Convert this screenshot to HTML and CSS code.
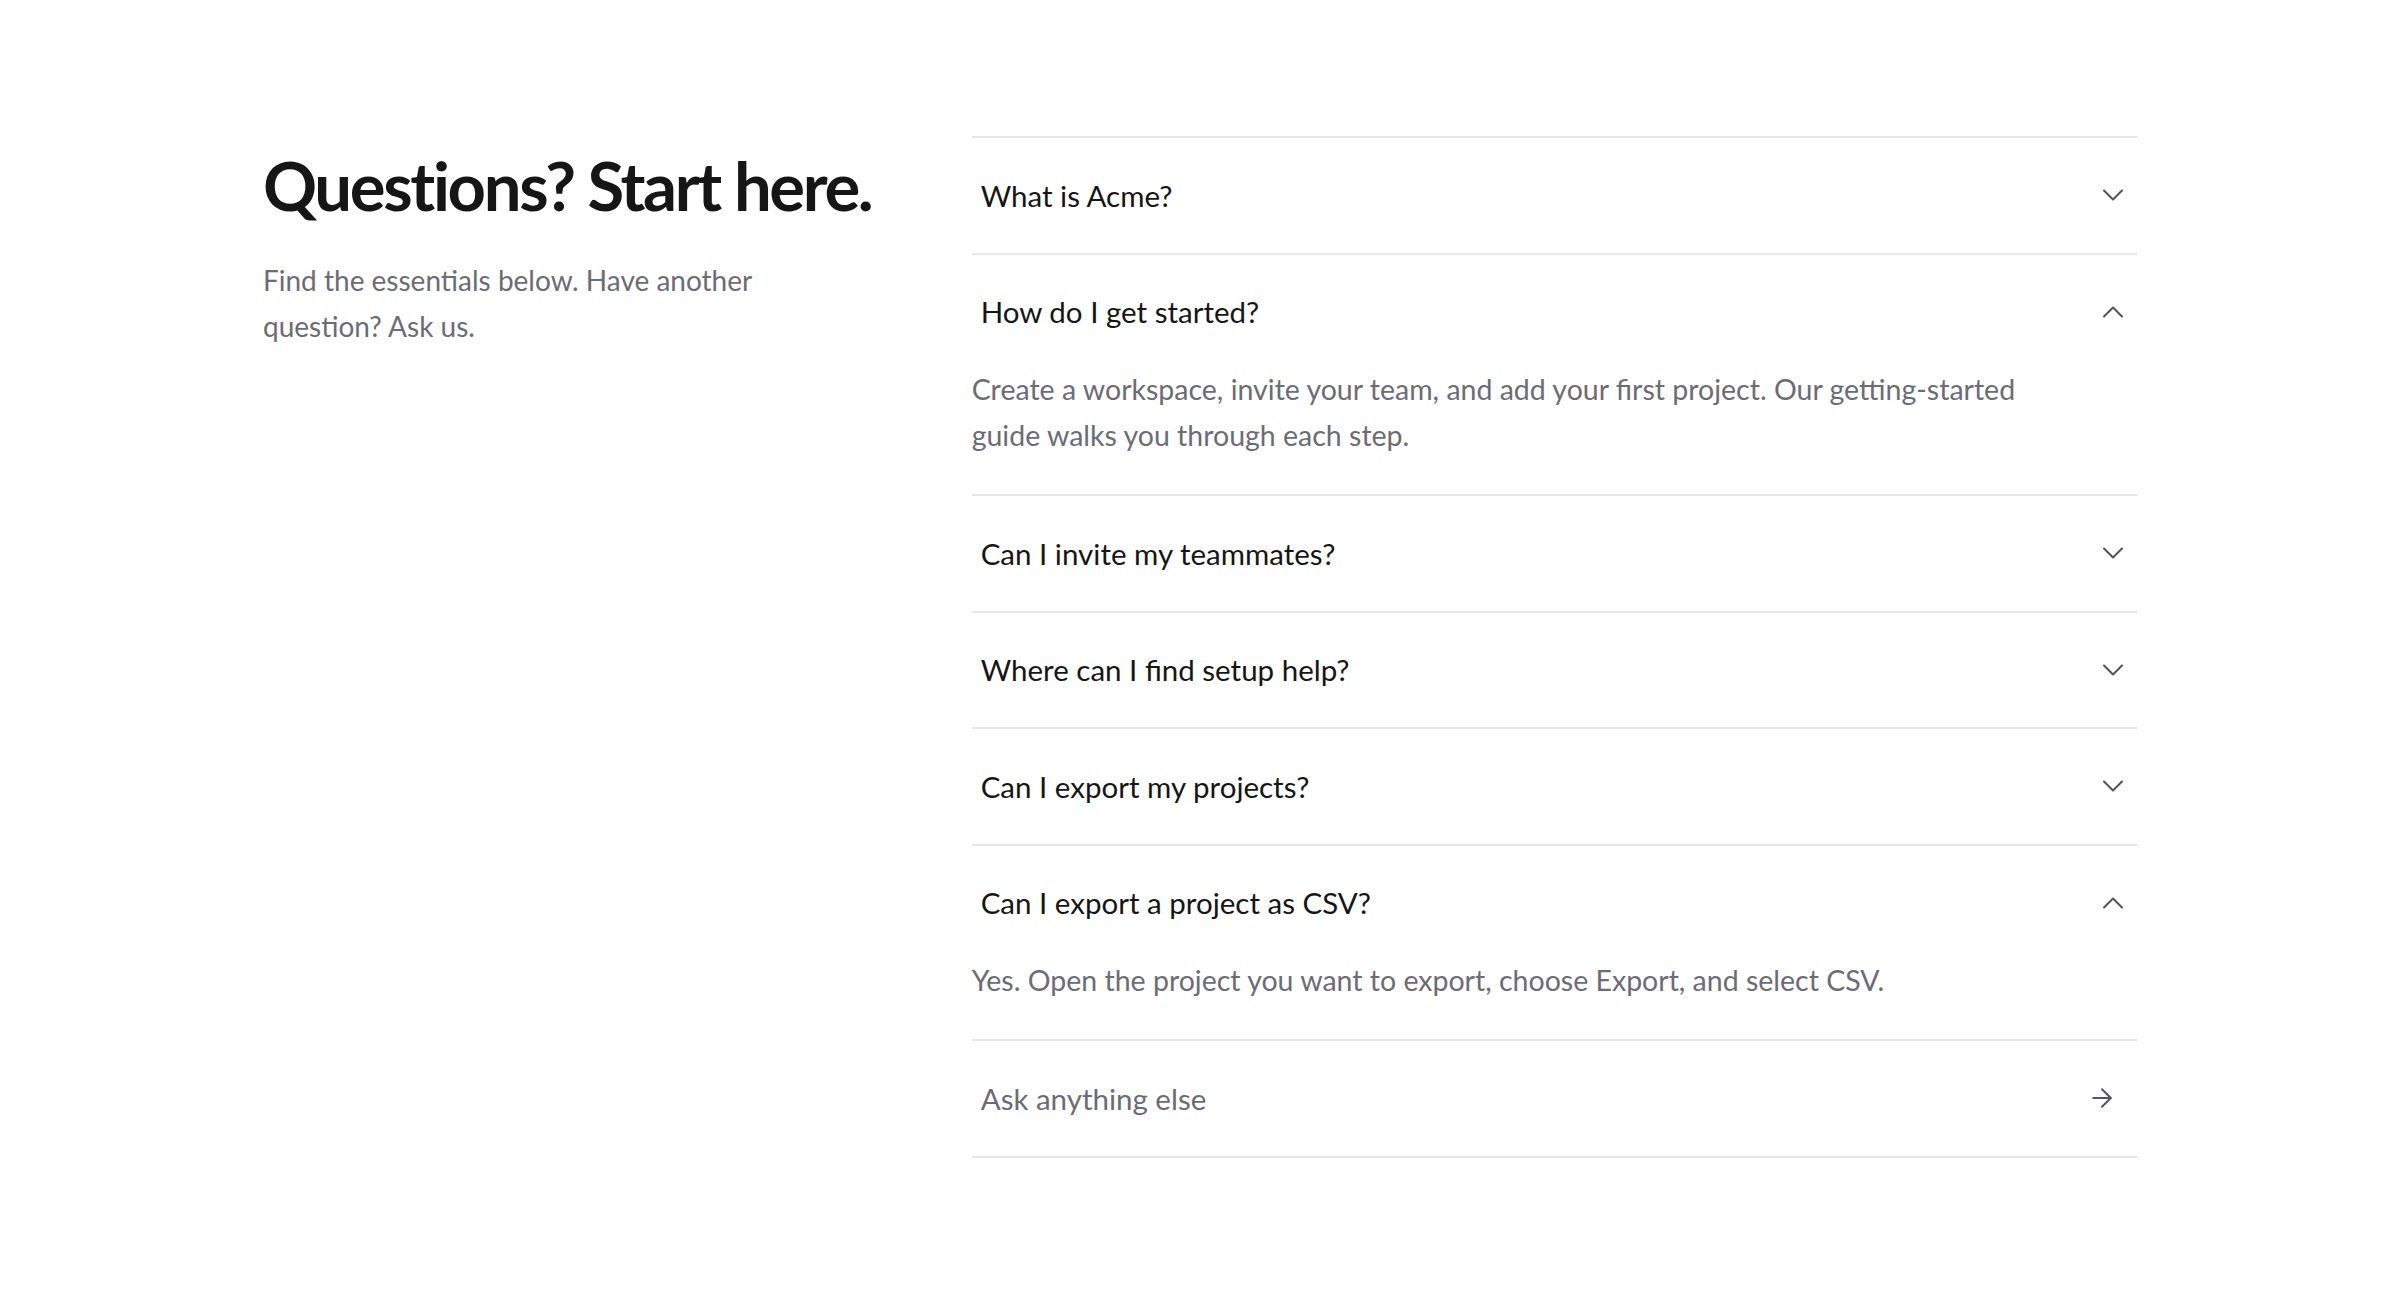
FILE: index.html
```html
<!DOCTYPE html>
<html lang="en">
<head>
<meta charset="utf-8">
<title>FAQ</title>
<link rel="stylesheet" href="styles.css">
</head>
<body>
<section class="faq">
  <div class="intro">
    <h1 class="title">Questions? Start here.</h1>
    <p class="lead">Find the essentials below. Have another question? Ask us.</p>
  </div>
  <div class="list">
    <div class="item">
      <div class="head"><span class="q">What is Acme?</span>
        <svg class="chev" viewBox="0 0 24 24"><path d="m6 9 6 6 6-6"/></svg></div>
    </div>
    <div class="item open">
      <div class="head"><span class="q">How do I get started?</span>
        <svg class="chev" viewBox="0 0 24 24"><path d="m18 15-6-6-6 6"/></svg></div>
      <p class="answer">Create a workspace, invite your team, and add your first project. Our getting-started guide walks you through each step.</p>
    </div>
    <div class="item">
      <div class="head"><span class="q">Can I invite my teammates?</span>
        <svg class="chev" viewBox="0 0 24 24"><path d="m6 9 6 6 6-6"/></svg></div>
    </div>
    <div class="item">
      <div class="head"><span class="q">Where can I find setup help?</span>
        <svg class="chev" viewBox="0 0 24 24"><path d="m6 9 6 6 6-6"/></svg></div>
    </div>
    <div class="item">
      <div class="head"><span class="q">Can I export my projects?</span>
        <svg class="chev" viewBox="0 0 24 24"><path d="m6 9 6 6 6-6"/></svg></div>
    </div>
    <div class="item open">
      <div class="head"><span class="q">Can I export a project as CSV?</span>
        <svg class="chev" viewBox="0 0 24 24"><path d="m18 15-6-6-6 6"/></svg></div>
      <p class="answer">Yes. Open the project you want to export, choose Export, and select CSV.</p>
    </div>
    <div class="item">
      <div class="head ask"><span class="q muted">Ask anything else</span>
        <svg class="arrow" viewBox="0 0 24 24"><path d="M5 12h14"/><path d="m12 5 7 7-7 7"/></svg></div>
    </div>
  </div>
</section>
</body>
</html>
```
FILE: styles.css
```css
html, body {
  margin: 0;
  padding: 0;
  background: #ffffff;
}

body {
  font-family: "Lato", "Inter", "Liberation Sans", sans-serif;
  color: #171717;
}

.faq {
  max-width: 1874px;
  margin: 0 auto;
  padding-top: 136px;
  display: grid;
  grid-template-columns: minmax(0, 1fr) minmax(0, 2fr);
  column-gap: 126px;
  align-items: start;
}

.title {
  margin: 13px 0 0;
  font-size: 67px;
  line-height: 1.1;
  font-weight: 700;
  letter-spacing: -0.035em;
  white-space: nowrap;
  color: #161616;
}

.lead {
  margin: 34px 0 0;
  max-width: 560px;
  font-size: 28px;
  line-height: 46px;
  color: #6c6c74;
}

.list {
  border-top: 2px solid #e6e6e6;
}

.item {
  border-bottom: 2px solid #e6e6e6;
}

.head {
  height: 114.5px;
  display: flex;
  align-items: center;
  justify-content: space-between;
  padding: 0 6px 0 9px;
}

.q {
  font-size: 29.5px;
  color: #161616;
}

.q.muted {
  color: #6c6c74;
}

.chev {
  width: 36px;
  height: 36px;
  fill: none;
  stroke: #55555b;
  stroke-width: 1.4;
  stroke-linecap: round;
  stroke-linejoin: round;
}

.ask {
  padding-right: 20px;
}

.arrow {
  width: 30px;
  height: 30px;
  fill: none;
  stroke: #55555b;
  stroke-width: 1.6;
  stroke-linecap: round;
  stroke-linejoin: round;
}

.answer {
  margin: -3px 0 0;
  padding: 0 0 36px;
  max-width: 1085px;
  font-size: 28.5px;
  line-height: 46px;
  color: #6c6c74;
}
```
